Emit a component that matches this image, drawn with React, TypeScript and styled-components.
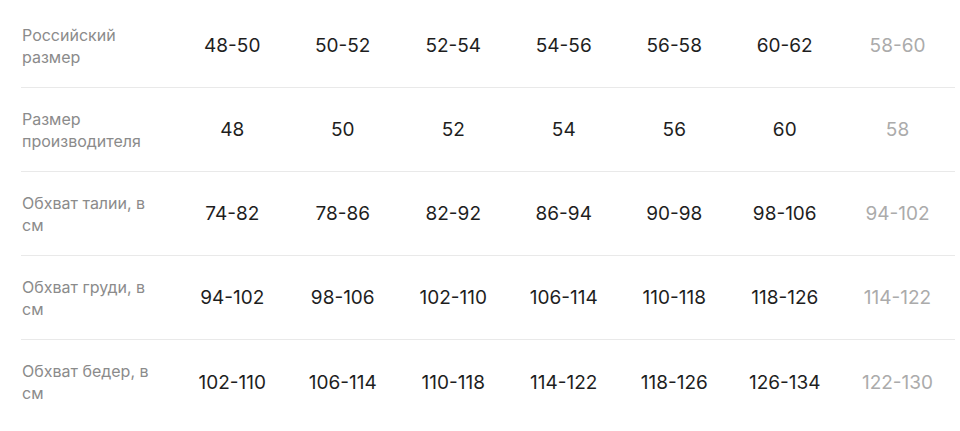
import React from 'react';
import styled, { createGlobalStyle } from 'styled-components';

const GlobalStyle = createGlobalStyle`
  body {
    margin: 0;
    background: #fff;
    font-family: Inter, "Noto Sans", sans-serif;
  }
  * {
    box-sizing: border-box;
  }
`;

const rows = [
  { label: 'Российский размер', values: ['48-50', '50-52', '52-54', '54-56', '56-58', '60-62', '58-60'] },
  { label: 'Размер производителя', values: ['48', '50', '52', '54', '56', '60', '58'] },
  { label: 'Обхват талии, в см', values: ['74-82', '78-86', '82-92', '86-94', '90-98', '98-106', '94-102'] },
  { label: 'Обхват груди, в см', values: ['94-102', '98-106', '102-110', '106-114', '110-118', '118-126', '114-122'] },
  { label: 'Обхват бедер, в см', values: ['102-110', '106-114', '110-118', '114-122', '118-126', '126-134', '122-130'] },
];

const Table = () => {
  return (
    <Wrapper>
      {rows.map((row, i) => (
        <Row key={i} $last={i === rows.length - 1}>
          <Label>{row.label}</Label>
          {row.values.map((v, j) => (
            <Cell key={j} $muted={j === row.values.length - 1}>{v}</Cell>
          ))}
        </Row>
      ))}
    </Wrapper>
  );
};

const Wrapper = styled.div`
  padding: 4px 5px 0 21px;
`;

const Row = styled.div<{ $last?: boolean }>`
  display: grid;
  grid-template-columns: 156px repeat(6, 110.5px) 1fr;
  align-items: center;
  height: 84px;
  border-bottom: ${(p) => (p.$last ? 'none' : '1px solid #e9e9e9')};
`;

const Label = styled.div`
  font-size: 16px;
  line-height: 22px;
  color: #8b8b8b;
  padding-left: 1px;
  padding-right: 10px;
`;

const Cell = styled.div<{ $muted?: boolean }>`
  text-align: center;
  font-size: 19px;
  color: ${(p) => (p.$muted ? '#ababab' : '#1e1e1e')};
`;

export default function App() {
  return (
    <>
      <GlobalStyle />
      <Table />
    </>
  );
}
